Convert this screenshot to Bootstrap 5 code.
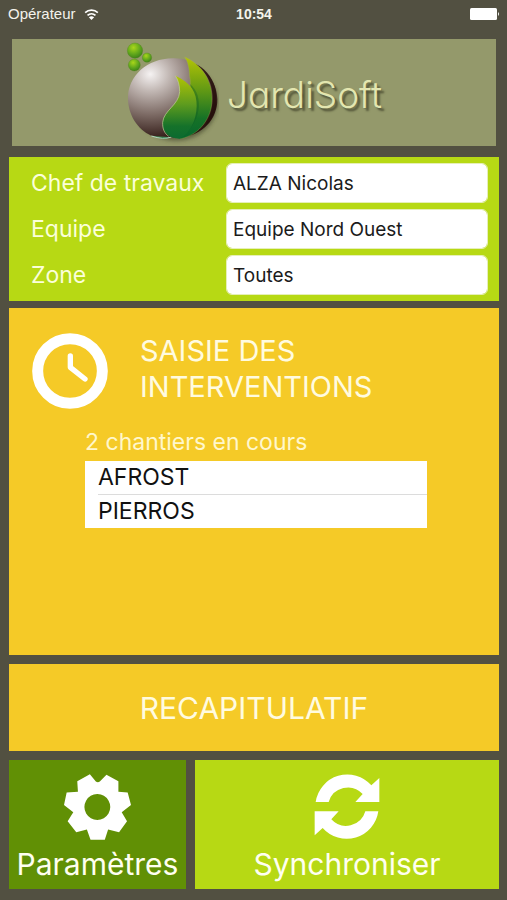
<!DOCTYPE html>
<html lang="fr">
<head>
<meta charset="utf-8">
<meta name="viewport" content="width=device-width, initial-scale=1">
<title>JardiSoft</title>
<link href="https://cdn.jsdelivr.net/npm/bootstrap@5.3.0/dist/css/bootstrap.min.css" rel="stylesheet">
<style>
body { background: #525041; font-family: Inter, sans-serif; }
.screen { padding: 0 8px 11px 9px; }
.status { height: 28px; font: 14px/28px "Liberation Sans", sans-serif; color: #f4f3ec; margin-right: -8px; margin-left: -1px; padding-right: 7px; }
.status-cell { flex: 1 1 0; }
.carrier { font-size: 15px; }
.banner { background: #94996b; height: 107px; margin: 11px 3px 11px; gap: 8px; }
.brand { font-size: 37px; font-weight: 300; line-height: 44px; padding-top: 4px; font-feature-settings: "cv11"; color: #e3e6b0; text-shadow: 3px 3px 2px #55573a, 1px 1px 1px #7b7d55; }
.lime { background: #b7d914; }
.amber { background: #f5ca27; }
.leaf { background: #619005; }
.crew { padding: 6px 11px 6px 22px; gap: 6px; margin-bottom: 7px; }
.crew-label { width: 195px; font-size: 23px; line-height: 40px; color: #fbffd9; flex: none; }
.crew-input { height: 40px; font-size: 19px; padding: 0 6px; border: 1px solid #e6efb8; border-radius: 6px; color: #1b1b1b; }
.work { padding: 25px 23px 24px; }
.work-title { font-size: 29px; line-height: 36px; color: #fffbe0; font-weight: 400; }
.work-head { gap: 32px; }
.sites { margin: 18px 49px 0 53px; }
.sites-caption { font-size: 23px; line-height: 30px; color: #fff7cc; margin: 0 0 4px; }
.site { font-size: 23px; line-height: 33px; color: #111; padding: 0 0 0 13px; }
.site-list { background: #fff; }
.site-line { height: 1px; background: #dcdcdc; margin-left: 13px; }
.tile { border: 0; border-radius: 0; padding: 0; font-size: 30px; line-height: 36px; color: #fffff0; }
.recap { height: 87px; margin: 9px 0; color: #fffbe0; }
.bottom { gap: 9px; height: 129px; }
.w-settings { flex: 177 1 0; padding-top: 14px; }
.w-sync { flex: 304 1 0; padding-top: 14px; }
.tile-icon { margin-bottom: 6px; }
</style>
</head>
<body>
<div class="screen d-flex flex-column min-vh-100">
  <header>
    <div class="status d-flex">
      <div class="status-cell d-flex align-items-center">
        <span class="carrier">Opérateur</span>
        <svg class="ms-2" width="15" height="11" viewBox="0 0 44 33" aria-hidden="true">
          <path d="M3 11a28 28 0 0 1 38 0M10 19a18 18 0 0 1 24 0" fill="none" stroke="#fff" stroke-width="5"/>
          <path d="M22 33l-8-8a12 12 0 0 1 16 0z" fill="#fff"/>
        </svg>
      </div>
      <div class="fw-bold">10:54</div>
      <div class="status-cell d-flex align-items-center justify-content-end">
        <svg width="30" height="13" viewBox="0 0 30 13" aria-hidden="true"><rect width="27" height="12" rx="1.5" fill="#fff"/><path d="M28 4q2 2 0 4z" fill="#fff"/></svg>
      </div>
    </div>
    <div class="banner d-flex align-items-center justify-content-center">
      <svg width="93" height="104" viewBox="46 16 279 312" aria-hidden="true">
        <defs>
          <radialGradient id="ball" cx=".25" cy=".2" r=".85"><stop offset="0" stop-color="#f5f2f2"/><stop offset=".25" stop-color="#c2b8b4"/><stop offset=".6" stop-color="#7d6b65"/><stop offset="1" stop-color="#2b1410"/></radialGradient>
          <linearGradient id="leafBack" x1="0" y1="0" x2="0" y2="1"><stop offset="0" stop-color="#b4c405"/><stop offset=".4" stop-color="#639a14"/><stop offset=".75" stop-color="#167226"/><stop offset="1" stop-color="#07662e"/></linearGradient>
          <linearGradient id="leafFront" x1="0" y1="0" x2="0" y2="1"><stop offset="0" stop-color="#b2c404"/><stop offset=".45" stop-color="#5f9c1e"/><stop offset=".8" stop-color="#15722a"/><stop offset="1" stop-color="#0c6a30"/></linearGradient>
          <radialGradient id="dot" cx=".4" cy=".3" r=".7"><stop offset="0" stop-color="#a9d61a"/><stop offset=".6" stop-color="#62a81c"/><stop offset="1" stop-color="#3e8419"/></radialGradient>
          <filter id="soft" x="-20%" y="-20%" width="140%" height="140%"><feGaussianBlur stdDeviation="7"/></filter>
          <clipPath id="globe"><path d="M186 68C263 68 318 120 318 190C318 257 262 308 186 308C110 308 52 257 52 188C52 120 110 68 186 68Z"/></clipPath>
        </defs>
        <ellipse cx="196" cy="200" rx="125" ry="115" fill="#3d4028" opacity=".65" filter="url(#soft)"/>
        <path d="M122 302L160 310L184 303Z" fill="#17703a"/>
        <path d="M186 68C256 66 318 120 320 190C321 250 276 300 208 306L122 300C80 282 52 236 52 188C52 120 110 69 186 68Z" fill="url(#ball)"/>
        <g clip-path="url(#globe)"><path d="M232 76C320 110 330 220 262 302L318 270V110Z" fill="#260f0b" opacity=".8"/></g>
        <path d="M122 301Q158 313 182 304" stroke="#b9d6c0" stroke-width="3" fill="none"/>
        <path d="M222 64C276 88 304 136 304 190C304 246 268 296 212 309C184 308 172 290 190 264C212 236 248 170 237 122C236 98 232 78 222 64Z" fill="url(#leafBack)" stroke="#a7b64b" stroke-width="1"/>
        <path d="M238 145C253 190 250 240 225 292L206 304C272 270 282 180 238 145Z" fill="#0b5922" opacity=".35"/>
        <path d="M194 120C240 140 259 170 258 211C257 254 239 290 208 309C179 310 153 292 156 260C159 224 205 208 207 168C207 148 202 132 194 120Z" fill="url(#leafFront)"/>
        <path d="M194 120C202 132 207 148 207 168C205 208 159 224 156 260C155 280 162 294 174 302" fill="none" stroke="#c3d39a" stroke-width="2"/>
        <g stroke="#55801d" stroke-width="1" fill="url(#dot)"><circle cx="73" cy="45" r="23"/><circle cx="109" cy="66" r="14"/><circle cx="71" cy="88" r="18"/></g>
      </svg>
      <span class="brand">JardiSoft</span>
    </div>
  </header>

  <main class="d-flex flex-column flex-grow-1">
    <form class="crew lime d-flex flex-column">
      <div class="d-flex"><label class="crew-label" for="chef">Chef de travaux</label><input class="crew-input form-control" id="chef" type="text" value="ALZA Nicolas"></div>
      <div class="d-flex"><label class="crew-label" for="equipe">Equipe</label><input class="crew-input form-control" id="equipe" type="text" value="Equipe Nord Ouest"></div>
      <div class="d-flex"><label class="crew-label" for="zone">Zone</label><input class="crew-input form-control" id="zone" type="text" value="Toutes"></div>
    </form>

    <section class="work amber flex-grow-1">
      <div class="work-head d-flex align-items-start">
        <svg class="flex-shrink-0" width="76" height="76" viewBox="0 0 228 228" fill="none" stroke="#fff" aria-hidden="true">
          <circle cx="114" cy="114" r="97" stroke-width="33"/>
          <path d="M115 69V103L159 138" stroke-width="16" stroke-linecap="round" stroke-linejoin="round"/>
        </svg>
        <h1 class="work-title m-0">SAISIE DES<br>INTERVENTIONS</h1>
      </div>
      <div class="sites">
        <p class="sites-caption">2 chantiers en cours</p>
        <div class="site-list">
          <div class="site">AFROST</div>
          <div class="site-line"></div>
          <div class="site">PIERROS</div>
        </div>
      </div>
    </section>

    <button type="button" class="btn tile recap amber">RECAPITULATIF</button>

    <div class="bottom d-flex">
      <button type="button" class="btn tile leaf w-settings d-flex flex-column align-items-center">
        <svg class="tile-icon" width="67" height="66" viewBox="190 403 202 198" aria-hidden="true">
          <path fill="#fff" fill-rule="evenodd" d="M230 424L268 403L286 425Q292 430 298 425L318 405L354 424V456L382 458L392 496L364 518L380 545L356 578L323 570L313 601H270L259 570L227 578L201 545L218 518L190 496L198 458L232 456ZM290 463a39 39 0 1 0 1 0z"/>
        </svg>
        <span>Paramètres</span>
      </button>
      <button type="button" class="btn tile lime w-sync d-flex flex-column align-items-center">
        <svg class="tile-icon" width="66" height="66" viewBox="184 404 198 198" fill="#fff" aria-hidden="true">
          <path id="arrow" d="M189 488A96 96 0 0 1 356 438L380 416V488H308L330 464A60 60 0 0 0 228 488Z"/>
          <use href="#arrow" transform="rotate(180 283 502)"/>
        </svg>
        <span>Synchroniser</span>
      </button>
    </div>
  </main>
</div>
<script src="https://cdn.jsdelivr.net/npm/bootstrap@5.3.0/dist/js/bootstrap.bundle.min.js"></script>
</body>
</html>
